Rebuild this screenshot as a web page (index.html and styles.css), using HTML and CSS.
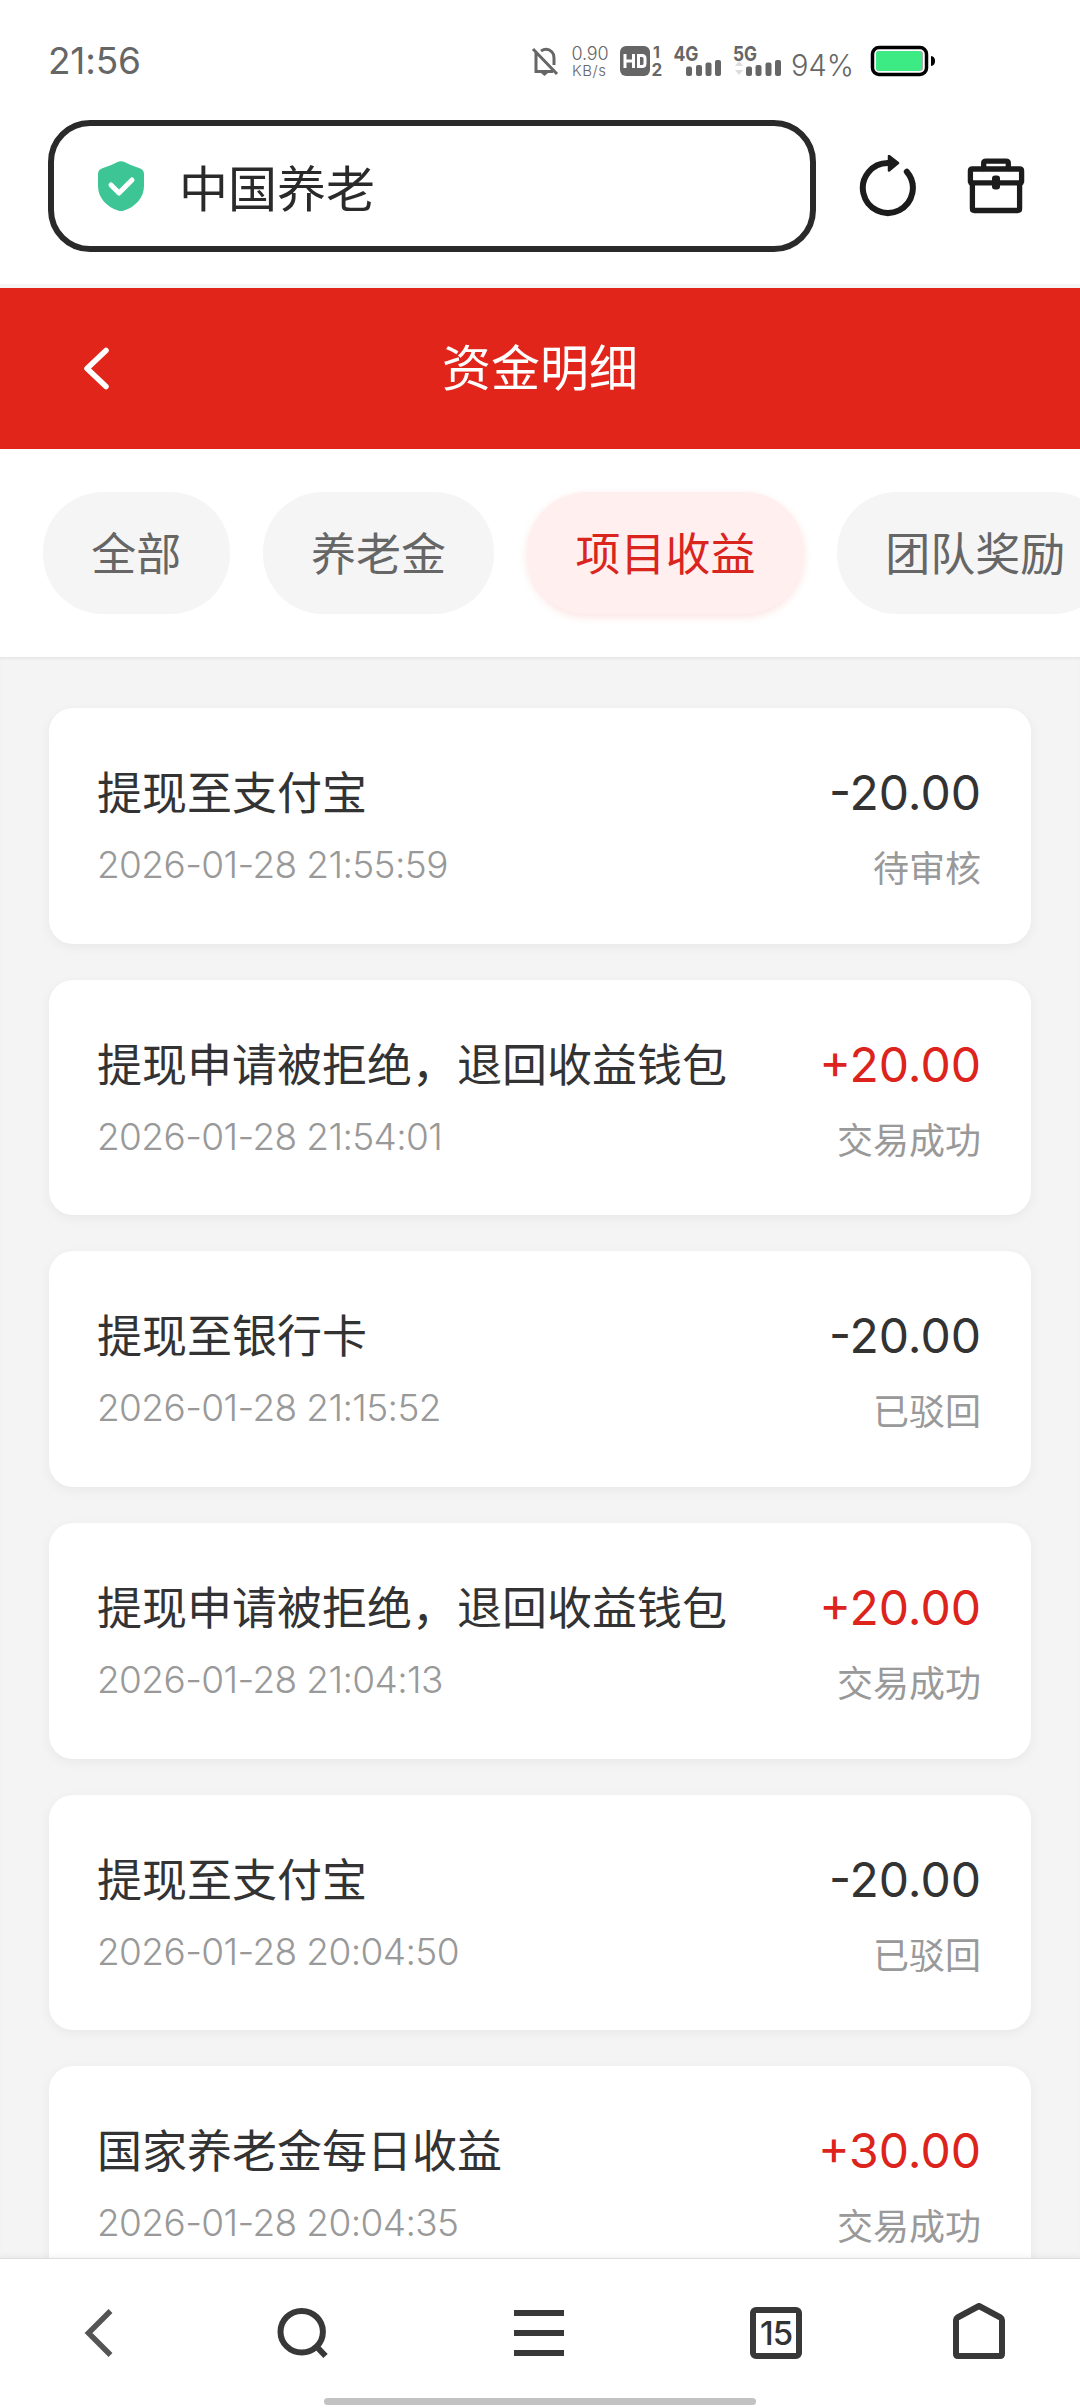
FILE: index.html
```html
<!DOCTYPE html>
<html lang="zh-CN">
<head>
<meta charset="utf-8">
<meta name="viewport" content="width=device-width">
<title>资金明细</title>
<link rel="stylesheet" href="styles.css">
</head>
<body>
<div class="screen">
  <div class="status-bar">
    <span class="clock">21:56</span>
    <svg class="status-icons" width="410" height="40" viewBox="530 40 410 40">
      <g fill="none" stroke="#666" stroke-width="3">
        <path d="M533 49L557 74M536 53V71.500H553"/>
        <path d="M541 51Q547 47 552 52Q554 54 554 58V65"/>
      </g>
      <path d="M541 73h7l-3.500 3z" fill="#666"/>
      <g class="status-text">
        <text x="571.500" y="60" font-size="18" textLength="37">0.90</text>
        <text x="572" y="75.500" font-size="15" textLength="34">KB/s</text>
        <text x="791" y="76" font-size="30" textLength="63" lengthAdjust="spacingAndGlyphs">94%</text>
      </g>
      <rect x="620" y="46" width="30" height="30" rx="6" fill="#666"/>
      <g fill="none" stroke="#fff" stroke-width="3">
        <path d="M625 54V68M633.500 54V68M625 61H633.500"/>
        <path d="M638.500 55.500H642Q645 55.500 645 58.500V63.500Q645 66.500 642 66.500H638.500Z"/>
      </g>
      <g class="status-text status-strong">
        <text x="653" y="58" font-size="16">1</text>
        <text x="651.500" y="75.500" font-size="17">2</text>
        <text x="673.500" y="61" font-size="20" textLength="25" lengthAdjust="spacingAndGlyphs">4G</text>
        <text x="733" y="61" font-size="20" textLength="24" lengthAdjust="spacingAndGlyphs">5G</text>
      </g>
      <g fill="#666">
        <rect x="686" y="66.500" width="6" height="9.500" rx="2"/>
        <rect x="696" y="65" width="6" height="11" rx="2"/>
        <rect x="705.500" y="62.500" width="6" height="13.500" rx="2"/>
        <rect x="715" y="60" width="6" height="16" rx="2"/>
        <rect x="746" y="66.500" width="6" height="9.500" rx="2"/>
        <rect x="755.500" y="65" width="6" height="11" rx="2"/>
        <rect x="765.500" y="62.500" width="6" height="13.500" rx="2"/>
        <rect x="775" y="60" width="6" height="16" rx="2"/>
      </g>
      <path d="M735 66l4-5 4 5zM735 70l4 5 4-5z" fill="#ddd"/>
      <rect x="872.500" y="47.500" width="54" height="27" rx="6.500" fill="#fff" stroke="#000" stroke-width="3.500"/>
      <rect x="876" y="51" width="47" height="20" rx="3" fill="#aaa"/>
      <rect x="876" y="51" width="45" height="20" rx="3" fill="#3deb84"/>
      <path d="M931 56Q935 56.500 935 61T931 66Z" fill="#000"/>
    </svg>
  </div>

  <div class="browser-bar">
    <div class="address">
      <svg width="46" height="50" viewBox="0 0 46 50">
        <path d="M19 1.300Q23 -.7 27 1.300Q33 4.700 41 7Q46 8.500 46 13V25C46 37 37 46 26 49.500Q23 50.500 20 49.500C9 46 0 37 0 25V13Q0 8.500 5 7Q13 4.700 19 1.300Z" fill="#3dc596"/>
        <path d="M13 24L21 32L34 19" fill="none" stroke="#fff" stroke-width="5" stroke-linecap="round" stroke-linejoin="round"/>
      </svg>
      <span>中国养老</span>
    </div>
    <svg class="reload" width="58" height="62" viewBox="859 154 58 62">
      <path d="M888.500 162A25 25 0 1 0 906.800 170.700" fill="none" stroke="#1c1c1c" stroke-width="6" stroke-linecap="round"/>
      <path d="M889 155L898 162L889 169.500Z" fill="#1c1c1c" stroke="#1c1c1c" stroke-width="2.500" stroke-linejoin="round"/>
    </svg>
    <svg class="toolbox" width="58" height="56" viewBox="967 157.500 58 56">
      <g fill="none" stroke="#1c1c1c" stroke-width="5.300" stroke-linejoin="round" stroke-linecap="round">
        <path d="M983.700 168V162.500Q983.700 160.600 986 160.600H1006Q1008.300 160.600 1008.300 162.500V168"/>
        <path d="M970.400 181V170.500Q970.400 168.500 972.400 168.500H1019.600Q1021.600 168.500 1021.600 170.500V181M971 182.300H1021"/>
        <path d="M972.400 183V208Q972.400 210 974.400 210H1017.600Q1019.600 210 1019.600 208V183"/>
      </g>
      <rect x="992" y="175" width="8" height="14" rx="3" fill="#1c1c1c"/>
    </svg>
  </div>

  <header class="page-header">
    <svg class="back" width="30" height="46" viewBox="0 0 30 46">
      <path d="M26 4.500L7 22.500L26 40.500" fill="none" stroke="#fff" stroke-width="5.500" stroke-linecap="round" stroke-linejoin="round"/>
    </svg>
    <h1>资金明细</h1>
  </header>

  <nav class="tabs">
    <span class="tab">全部</span>
    <span class="tab">养老金</span>
    <span class="tab active">项目收益</span>
    <span class="tab">团队奖励</span>
  </nav>

  <main class="records">
    <article class="record">
      <div class="info"><div class="title">提现至支付宝</div><div class="date">2026-01-28 21:55:59</div></div>
      <div class="result"><div class="amount">-20.00</div><div class="state">待审核</div></div>
    </article>
    <article class="record">
      <div class="info"><div class="title">提现申请被拒绝，退回收益钱包</div><div class="date">2026-01-28 21:54:01</div></div>
      <div class="result"><div class="amount income">+20.00</div><div class="state">交易成功</div></div>
    </article>
    <article class="record">
      <div class="info"><div class="title">提现至银行卡</div><div class="date">2026-01-28 21:15:52</div></div>
      <div class="result"><div class="amount">-20.00</div><div class="state">已驳回</div></div>
    </article>
    <article class="record">
      <div class="info"><div class="title">提现申请被拒绝，退回收益钱包</div><div class="date">2026-01-28 21:04:13</div></div>
      <div class="result"><div class="amount income">+20.00</div><div class="state">交易成功</div></div>
    </article>
    <article class="record">
      <div class="info"><div class="title">提现至支付宝</div><div class="date">2026-01-28 20:04:50</div></div>
      <div class="result"><div class="amount">-20.00</div><div class="state">已驳回</div></div>
    </article>
    <article class="record">
      <div class="info"><div class="title">国家养老金每日收益</div><div class="date">2026-01-28 20:04:35</div></div>
      <div class="result"><div class="amount income">+30.00</div><div class="state">交易成功</div></div>
    </article>
  </main>

  <footer class="toolbar">
    <div class="tools">
      <svg width="60" height="60" viewBox="69 2303 60 60"><path d="M110.500 2311L88.500 2333L110.500 2355" fill="none" stroke="#555" stroke-width="5.500"/></svg>
      <svg width="60" height="60" viewBox="272 2303 60 60"><g fill="none" stroke="#383838" stroke-width="6"><ellipse cx="301.700" cy="2331.700" rx="21.200" ry="20.800"/><path d="M316 2346L325.500 2356"/></g></svg>
      <svg width="60" height="60" viewBox="509 2303 60 60"><path d="M514 2313H564M514 2333H564M514 2353H564" stroke="#383838" stroke-width="6"/></svg>
      <span class="pages">15</span>
      <svg width="60" height="60" viewBox="949 2303 60 60"><path d="M956 2320Q956 2318.500 957.500 2317.500L979 2306L1000.500 2317.500Q1002 2318.500 1002 2320V2354Q1002 2356 1000 2356H958Q956 2356 956 2354Z" fill="none" stroke="#383838" stroke-width="6" stroke-linejoin="round"/></svg>
    </div>
    <div class="home-indicator"></div>
  </footer>
</div>
</body>
</html>
```
FILE: styles.css
```css
* { box-sizing: border-box; }

body {
  margin: 0;
  background: #fff;
  font-family: "Noto Sans CJK SC", sans-serif;
}

svg { display: block; flex: none; }

.screen {
  display: flex;
  flex-direction: column;
  width: 1080px;
  height: 2408px;
  overflow: hidden;
}

.status-bar {
  display: flex;
  flex: none;
  align-items: flex-end;
  justify-content: space-between;
  height: 80px;
  padding: 0 140px 0 48px;
}

.clock {
  color: #666;
  font: 400 37px/38px Inter, sans-serif;
  letter-spacing: -.2px;
}

.status-text {
  fill: #666;
  font-family: Inter, sans-serif;
  font-weight: 300;
}

.status-strong { font-weight: 700; }

.browser-bar {
  display: flex;
  flex: none;
  align-items: center;
  height: 208px;
  padding: 8px 55px 0 48px;
  border-bottom: 4px solid #f5f5f5;
}

.address {
  display: flex;
  align-items: center;
  gap: 35px;
  width: 768px;
  height: 132px;
  padding-left: 44px;
  border: 6px solid #2a2a2a;
  border-radius: 42px;
  color: #2a2a2a;
  font-size: 49px;
  line-height: 70px;
}

.reload { margin-left: 43px; }
.toolbox { margin-left: 50px; }

.page-header {
  display: grid;
  flex: none;
  grid-template-columns: 1fr auto 1fr;
  align-items: center;
  height: 161px;
  padding: 0 80px;
  background: #e1251b;
  color: #fff;
}

.page-header h1 {
  margin: 0;
  padding-bottom: 7px;
  font-size: 49px;
  font-weight: 400;
  line-height: 70px;
}

.tabs {
  display: flex;
  flex: none;
  gap: 33px;
  height: 208px;
  padding: 43px 0 0 43px;
  overflow: hidden;
}

.tab {
  flex: none;
  height: 122px;
  padding: 0 48.3px;
  border-radius: 60px;
  background: #f5f5f5;
  color: #666;
  font-size: 45px;
  line-height: 119px;
}

.tab.active {
  background: #ffefef;
  box-shadow: 0 3px 8px rgba(225, 37, 27, .13);
  color: #d9251d;
}

.records {
  display: flex;
  flex: 1;
  flex-direction: column;
  gap: 36px;
  min-height: 0;
  padding: 51px 49px 0;
  overflow: hidden;
  background: #f4f4f4;
  box-shadow: inset 0 3px 3px -1px rgba(0, 0, 0, .06);
}

.record {
  display: flex;
  flex: none;
  justify-content: space-between;
  height: 235.7px;
  padding: 51px 50px 0 48px;
  border-radius: 24px;
  background: #fff;
  box-shadow: 0 3px 12px rgba(0, 0, 0, .05);
}

.title {
  color: #333;
  font-size: 45px;
  line-height: 64px;
}

.date {
  margin-top: 18px;
  color: #999;
  font: 350 37px/48px Inter, sans-serif;
  letter-spacing: -.6px;
}

.result { text-align: right; }

.amount {
  color: #333;
  font: 380 48px/68px Inter, sans-serif;
}

.amount.income { color: #dc241d; }

.state {
  margin-top: 15px;
  color: #999;
  font-size: 36px;
  line-height: 48px;
}

.toolbar {
  display: flex;
  z-index: 1;
  flex: none;
  flex-direction: column;
  justify-content: space-between;
  height: 150px;
  padding: 44px 0 3px;
  border-top: 1px solid #ddd;
  background: #fff;
  box-shadow: 0 -2px 6px rgba(0, 0, 0, .05);
}

.tools {
  display: grid;
  grid-template-columns: 198px 208px 266px 208px 198px;
  align-items: center;
  justify-items: center;
}

.pages {
  width: 52px;
  height: 52px;
  border: 6px solid #383838;
  border-radius: 6px;
  color: #333;
  font: 450 33px/40px Inter, sans-serif;
  letter-spacing: -1px;
  text-align: center;
}

.home-indicator {
  width: 432px;
  height: 7px;
  margin: 0 auto;
  border-radius: 4px;
  background: #c2c2c2;
}
```
